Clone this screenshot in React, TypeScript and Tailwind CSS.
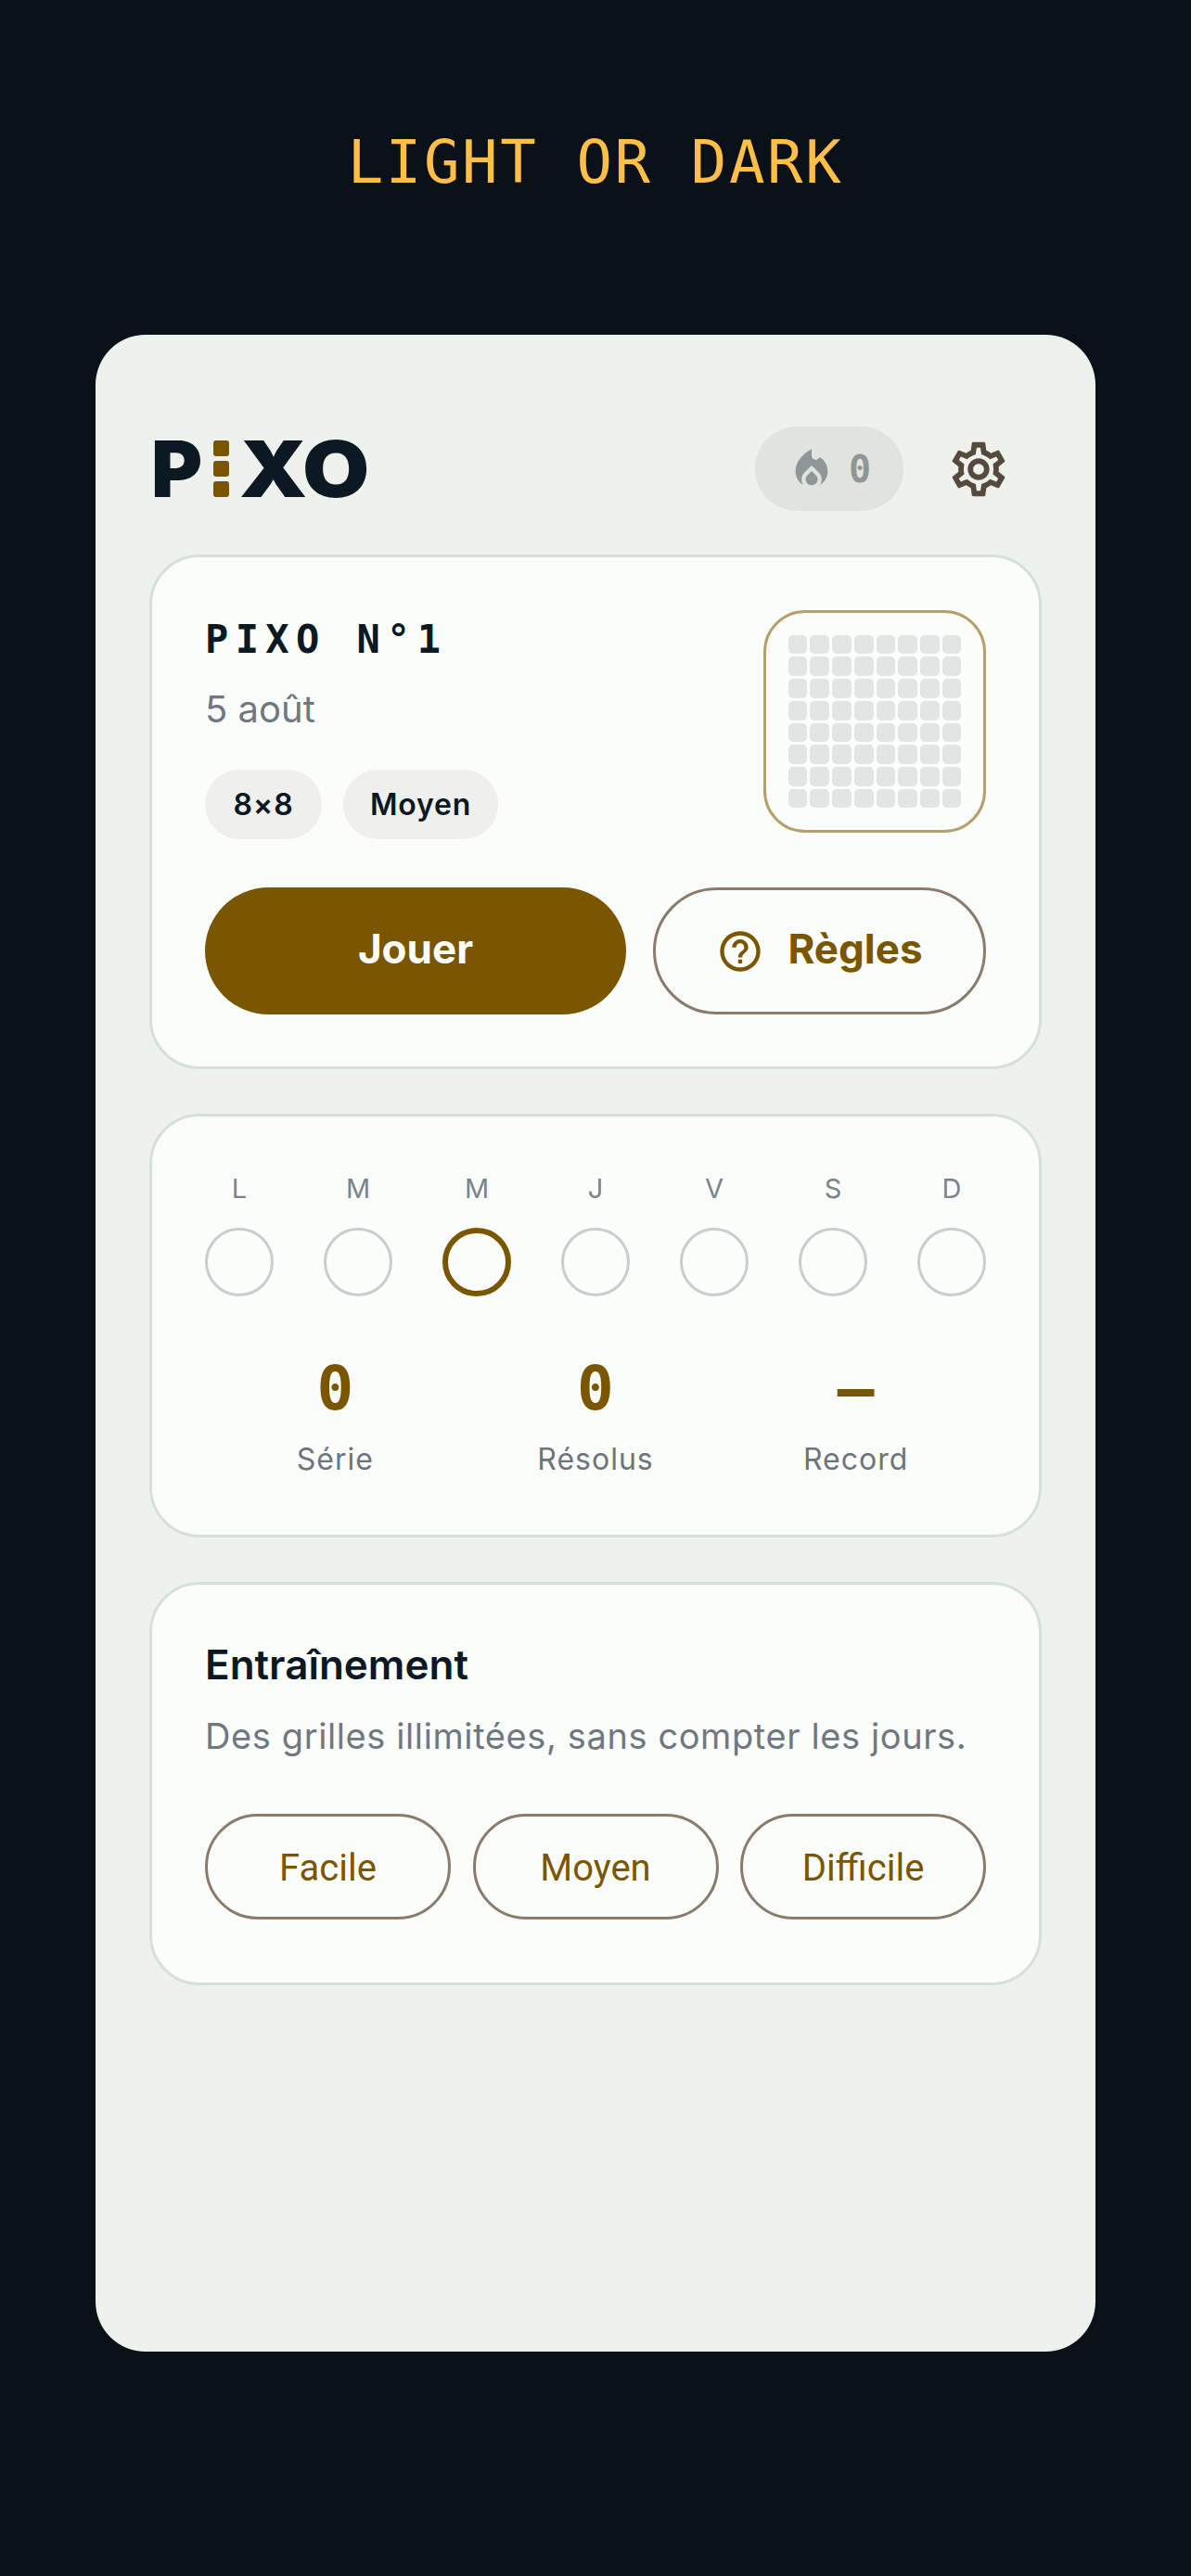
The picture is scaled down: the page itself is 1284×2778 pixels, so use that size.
import { MdLocalFireDepartment, MdOutlineSettings, MdOutlineHelpOutline } from "react-icons/md";

const sans = "font-['Inter','Noto_Sans',sans-serif]";
const mono = "font-['DejaVu_Sans_Mono',monospace]";

const days = ["L", "M", "M", "J", "V", "S", "D"];
const stats = [
  { value: "0", label: "Série" },
  { value: "0", label: "Résolus" },
  { value: "—", label: "Record" },
];
const levels = ["Facile", "Moyen", "Difficile"];

const Card = ({ className, children }: { className: string; children: React.ReactNode }) => {
  return <div className={`w-[962px] bg-[#fbfdfa] border-[3px] border-[#d5e0d9] rounded-[54px] ${className}`}>{children}</div>;
};

export default function App() {
  return (
    <div className={`w-full h-[2778px] bg-[#0a1118] flex flex-col items-center ${sans}`}>
      <div className={`mt-[135px] h-[80px] leading-[80px] text-[64px] tracking-[2.6px] text-[#ffbf47] ${mono}`}>LIGHT OR DARK</div>

      <div className="mt-[146px] w-[1078px] h-[2175px] bg-[#edf2ec] rounded-[54px] flex flex-col items-center">
        {/* header */}
        <div className="mt-[99px] w-[962px] h-[91px] flex items-center justify-between pl-[2px] pr-[33px]">
          <div className="flex items-center font-black text-[84px] leading-none tracking-[1px] text-[#0d1922]">
            <span>P</span>
            <div className="mx-[11px] flex flex-col gap-[5px]">
              <div className="w-[17px] h-[17px] rounded-[3px] bg-[#7a5600]" />
              <div className="w-[17px] h-[17px] rounded-[3px] bg-[#7a5600]" />
              <div className="w-[17px] h-[17px] rounded-[3px] bg-[#7a5600]" />
            </div>
            <span className="inline-block origin-left scale-x-[1.11]">XO</span>
          </div>
          <div className="flex items-center gap-[46px]">
            <div className="w-[160px] h-[91px] rounded-full bg-[#e0e4df] flex items-center justify-center gap-[14px] text-[#8f9698]">
              <MdLocalFireDepartment size={52} />
              <span className={`text-[40px] font-bold leading-none ${mono}`}>0</span>
            </div>
            <MdOutlineSettings size={70} className="text-[#554a3d]" />
          </div>
        </div>

        {/* today's puzzle */}
        <Card className="mt-[47px] h-[555px] pt-[57px] px-[57px]">
          <div className="flex justify-between">
            <div>
              <div className={`mt-[7px] text-[42px] leading-[50px] font-bold tracking-[7.4px] text-[#0d1922] ${mono}`}>PIXO N°1</div>
              <div className="mt-[25px] text-[40px] leading-[50px] text-[#6f7880]">5 août</div>
              <div className="mt-[40px] flex gap-[23px]">
                <div className="w-[126px] h-[75px] rounded-full bg-[#eff0ee] flex items-center justify-center text-[32px] tracking-[0.8px] font-semibold text-[#0d1922]">8×8</div>
                <div className="w-[167px] h-[75px] rounded-full bg-[#eff0ee] flex items-center justify-center text-[32px] tracking-[0.8px] font-semibold text-[#0d1922]">Moyen</div>
              </div>
            </div>
            <div className="w-[240px] h-[240px] border-[3px] border-[#b79f6b] rounded-[45px] flex items-center justify-center">
              <div className="grid grid-cols-8 gap-[3px]">
                {Array.from({ length: 64 }).map((_, i) => {
                  return <div key={`cell_${i}`} className="w-[20.7px] h-[20.7px] rounded-[5px] bg-[#e3e5e4]" />;
                })}
              </div>
            </div>
          </div>
          <div className="mt-[52px] flex gap-[29px]">
            <div className="w-[454px] h-[137px] pb-[6px] rounded-full bg-[#7a5600] flex items-center justify-center text-white text-[44px] font-bold">Jouer</div>
            <div className="w-[359px] h-[137px] rounded-full border-[3px] border-[#8a7b6c] flex items-center justify-center gap-[25px] text-[#7a5600] text-[44px] font-bold">
              <MdOutlineHelpOutline size={52} />
              <span className="pb-[6px]">Règles</span>
            </div>
          </div>
        </Card>

        {/* week and stats */}
        <Card className="mt-[48px] h-[457px] pt-[60px] px-[57px]">
          <div className="flex justify-between">
            {days.map((day, i) => {
              return (
                <div key={`day_${i}`} className="w-[74px] flex flex-col items-center gap-[24px]">
                  <div className="text-[29px] leading-[36px] text-[#7b848b]">{day}</div>
                  <div className={`w-[74px] h-[74px] rounded-full ${i === 2 ? "border-[6px] border-[#7a5600]" : "border-[3px] border-[#cbcdcd]"}`} />
                </div>
              );
            })}
          </div>
          <div className="mt-[62px] grid grid-cols-3">
            {stats.map((stat) => {
              return (
                <div key={stat.label} className="flex flex-col items-center">
                  <div className={`text-[66px] leading-[76px] font-bold text-[#7a5600] ${mono}`}>{stat.value}</div>
                  <div className="mt-[16px] text-[32px] leading-[44px] tracking-[1px] text-[#6c757c]">{stat.label}</div>
                </div>
              );
            })}
          </div>
        </Card>

        {/* practice */}
        <Card className="mt-[48px] h-[435px] pt-[59px] px-[57px]">
          <div className="text-[44px] leading-[54px] font-semibold text-[#0d1922]">Entraînement</div>
          <div className="mt-[25px] text-[38px] leading-[50px] tracking-[0.6px] text-[#6f7880]">Des grilles illimitées, sans compter les jours.</div>
          <div className="mt-[59px] flex justify-between">
            {levels.map((level) => {
              return (
                <div key={level} className="w-[265px] h-[114px] pt-[3px] rounded-full border-[3px] border-[#8a7b6c] flex items-center justify-center font-['Roboto',sans-serif] text-[40px] text-[#7a5600]">
                  {level}
                </div>
              );
            })}
          </div>
        </Card>
      </div>
    </div>
  );
}
